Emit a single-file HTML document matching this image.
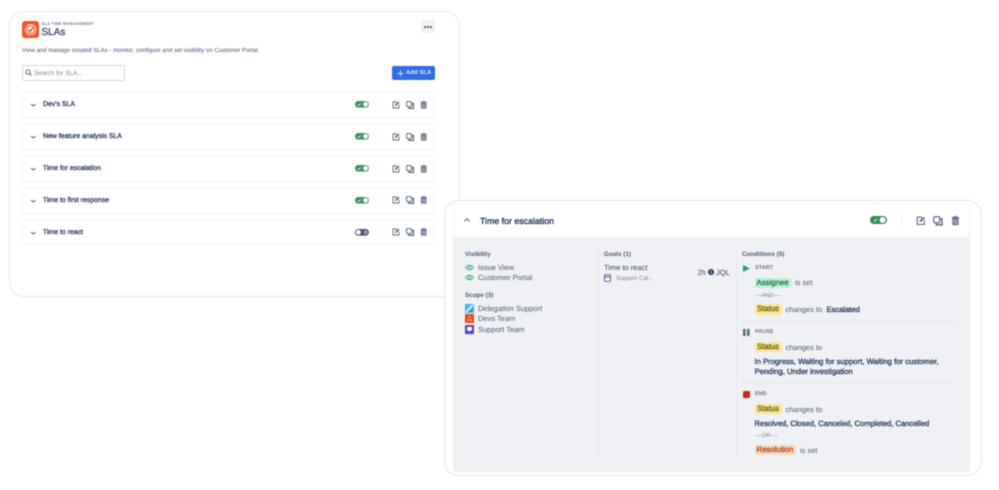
<!DOCTYPE html>
<html><head><meta charset="utf-8">
<style>
html,body{margin:0;padding:0;background:#fff}
body{width:999px;height:490px;position:relative;overflow:hidden;font-family:"Liberation Sans",sans-serif;color:#344563;text-rendering:geometricPrecision}
#w{position:absolute;left:0;top:0;width:999px;height:490px;filter:blur(.4px)}
.a{position:absolute;white-space:nowrap}
.card{position:absolute;box-sizing:border-box;background:#fff;border:1.5px solid #e6e3fd;border-radius:15px}
.row{position:absolute;left:22px;width:412px;height:26px;box-sizing:border-box;border:1px solid #f3f4f6;border-radius:3px;background:#fff}
.name{position:absolute;white-space:nowrap;left:43px;font-size:6.9px;color:#253858;-webkit-text-stroke:.3px #253858}
.lab{position:absolute;white-space:nowrap;font-size:6.3px;font-weight:bold;color:#4b5a78}
.t{position:absolute;white-space:nowrap;font-size:7.5px;color:#4a5a78}
.b{position:absolute;white-space:nowrap;font-size:7.6px;color:#253858;-webkit-text-stroke:.3px #253858}
.tag{position:absolute;white-space:nowrap;font-size:7.8px;border-radius:2px;height:10.5px;line-height:10.5px;text-align:center;-webkit-text-stroke:.3px currentColor}
.y{background:#f8e69a;color:#6b5a10}
.g{background:#bdf0d5;color:#1f7a50}
.o{background:#fbd9c0;color:#a5461d}
.hr{position:absolute;height:1px;background:#e6e8ec}
.state{position:absolute;white-space:nowrap;font-size:5.5px;font-weight:bold;color:#6b778c}
svg{position:absolute;overflow:visible}
</style></head>
<body>
<div id="w">

<!-- LEFT CARD -->
<div class="card" style="left:9px;top:11px;width:451px;height:286px"></div>

<svg style="left:22px;top:20.5px" width="17" height="17" viewBox="0 0 17 17">
<rect width="17" height="17" rx="3" fill="#f4552c"/>
<circle cx="8.5" cy="8.7" r="5.4" fill="#fff"/>
<circle cx="8.5" cy="8.7" r="4" fill="none" stroke="#e23f24" stroke-width="1"/>
<path d="M6.3 8.6L8 10.3L11.2 6.6" fill="none" stroke="#e23f24" stroke-width="1.4"/>
</svg>
<div class="a" style="left:41.5px;top:20.5px;font-size:4px;font-weight:bold;color:#6b778c;letter-spacing:.2px">SLA TIME MANAGEMENT</div>
<div class="a" style="left:41.5px;top:26.5px;font-size:10px;color:#253858;-webkit-text-stroke:.2px #253858">SLAs</div>

<div class="a" style="left:421px;top:20px;width:14px;height:13px;background:#f1f2f4;border-radius:2px"></div>
<div class="a" style="left:424px;top:26.2px;width:1.7px;height:1.7px;background:#344563;border-radius:50%;box-shadow:3px 0 0 #344563,6px 0 0 #344563"></div>

<div class="a" style="left:22px;top:47.8px;font-size:6px;color:#42526e">View and manage created SLAs - monitor, configure and set visibility on Customer Portal.</div>

<div class="a" style="left:21.5px;top:65px;width:103px;height:16px;box-sizing:border-box;border:1px solid #d5d8dd;border-radius:2px;background:#fff"></div>
<svg style="left:25px;top:69px" width="7" height="7" viewBox="0 0 7 7"><circle cx="3" cy="3" r="2.2" fill="none" stroke="#44546f" stroke-width=".9"/><path d="M4.7 4.7L6.6 6.6" stroke="#44546f" stroke-width=".9"/></svg>
<div class="a" style="left:34px;top:69.7px;font-size:6.4px;color:#7a869a">Search for SLA...</div>

<div class="a" style="left:392px;top:66px;width:42.5px;height:14px;background:#2f6ce5;border-radius:2px"></div>
<svg style="left:397px;top:69.5px" width="7" height="7" viewBox="0 0 7 7"><path d="M3.5 .5V6.5M.5 3.5H6.5" stroke="#dce8ff" stroke-width=".9"/></svg>
<div class="a" style="left:406px;top:70px;font-size:6px;font-weight:bold;color:#dce8ff">Add SLA</div>

<div class="row" style="top:92px"></div>
<div class="row" style="top:124px"></div>
<div class="row" style="top:156px"></div>
<div class="row" style="top:187.5px"></div>
<div class="row" style="top:219px"></div>

<div class="name" style="top:101.2px">Dev's SLA</div>
<div class="name" style="top:133.2px">New feature analysis SLA</div>
<div class="name" style="top:165.2px">Time for escalation</div>
<div class="name" style="top:196.7px">Time to first response</div>
<div class="name" style="top:228.7px">Time to react</div>

<svg width="0" height="0" style="left:0;top:0">
<defs>
<g id="chev"><path d="M0 0L2.2 2L4.4 0" fill="none" stroke="#44546f" stroke-width=".9"/></g>
<g id="edit" fill="none" stroke="#5b6980" stroke-width=".9"><path d="M5 1H1V7H7V3.5"/><path d="M3 5L3.3 3.4L6.3.6L7.5 1.8L4.5 4.7Z" fill="#5b6980" stroke="none"/></g>
<g id="copy" fill="none" stroke="#5b6980" stroke-width="1"><rect x=".6" y=".6" width="5" height="5" rx="1"/><path d="M6 2.5H7.5V7.4H2.8V6" stroke-width="1.2"/></g>
<g id="del"><path d="M1 1.6H6.4V7.6H1Z" fill="#6b778c"/><path d="M.4 1.3H7M2.6 1V.3H4.8V1" stroke="#5b6980" stroke-width=".7" fill="none"/><path d="M2.5 3V6.4M3.7 3V6.4M4.9 3V6.4" stroke="#dfe1e6" stroke-width=".45"/></g>
<g id="eye" fill="none" stroke="#57b48c" stroke-width=".9"><path d="M.4 3.5C2.5.4 6.5.4 8.6 3.5C6.5 6.6 2.5 6.6.4 3.5Z"/><circle cx="4.5" cy="3.5" r="1.5"/></g>
</defs>
</svg>

<!-- chevrons -->
<svg style="left:31px;top:104px" width="5" height="3"><use href="#chev"/></svg>
<svg style="left:31px;top:136px" width="5" height="3"><use href="#chev"/></svg>
<svg style="left:31px;top:168px" width="5" height="3"><use href="#chev"/></svg>
<svg style="left:31px;top:199.5px" width="5" height="3"><use href="#chev"/></svg>
<svg style="left:31px;top:231.5px" width="5" height="3"><use href="#chev"/></svg>

<!-- toggles -->
<svg style="left:355px;top:101.2px" width="14" height="7" viewBox="0 0 14 7"><rect width="14" height="6.6" rx="3.3" fill="#3f8f63"/><circle cx="10.6" cy="3.3" r="2.4" fill="#fff"/><path d="M2.8 3.4L4 4.5L5.7 2.3" fill="none" stroke="#fff" stroke-width=".7"/></svg>
<svg style="left:355px;top:133.2px" width="14" height="7" viewBox="0 0 14 7"><rect width="14" height="6.6" rx="3.3" fill="#3f8f63"/><circle cx="10.6" cy="3.3" r="2.4" fill="#fff"/><path d="M2.8 3.4L4 4.5L5.7 2.3" fill="none" stroke="#fff" stroke-width=".7"/></svg>
<svg style="left:355px;top:165.2px" width="14" height="7" viewBox="0 0 14 7"><rect width="14" height="6.6" rx="3.3" fill="#3f8f63"/><circle cx="10.6" cy="3.3" r="2.4" fill="#fff"/><path d="M2.8 3.4L4 4.5L5.7 2.3" fill="none" stroke="#fff" stroke-width=".7"/></svg>
<svg style="left:355px;top:196.7px" width="14" height="7" viewBox="0 0 14 7"><rect width="14" height="6.6" rx="3.3" fill="#3f8f63"/><circle cx="10.6" cy="3.3" r="2.4" fill="#fff"/><path d="M2.8 3.4L4 4.5L5.7 2.3" fill="none" stroke="#fff" stroke-width=".7"/></svg>
<svg style="left:355px;top:228.7px" width="14" height="7" viewBox="0 0 14 7"><rect width="14" height="6.6" rx="3.3" fill="#46516e"/><circle cx="3.4" cy="3.3" r="2.4" fill="#fff"/><circle cx="10.7" cy="3.3" r="1.4" fill="none" stroke="#fff" stroke-width=".6"/></svg>

<!-- dividers -->
<div class="a" style="left:381px;top:99px;width:1px;height:11px;background:#f0f1f3"></div>
<div class="a" style="left:381px;top:131px;width:1px;height:11px;background:#f0f1f3"></div>
<div class="a" style="left:381px;top:163px;width:1px;height:11px;background:#f0f1f3"></div>
<div class="a" style="left:381px;top:194.5px;width:1px;height:11px;background:#f0f1f3"></div>
<div class="a" style="left:381px;top:226.5px;width:1px;height:11px;background:#f0f1f3"></div>

<!-- action icons -->
<svg style="left:392px;top:100.5px" width="8" height="8"><use href="#edit"/></svg><svg style="left:406px;top:100.5px" width="8" height="8"><use href="#copy"/></svg><svg style="left:420px;top:100.5px" width="8" height="8"><use href="#del"/></svg>
<svg style="left:392px;top:132.5px" width="8" height="8"><use href="#edit"/></svg><svg style="left:406px;top:132.5px" width="8" height="8"><use href="#copy"/></svg><svg style="left:420px;top:132.5px" width="8" height="8"><use href="#del"/></svg>
<svg style="left:392px;top:164.5px" width="8" height="8"><use href="#edit"/></svg><svg style="left:406px;top:164.5px" width="8" height="8"><use href="#copy"/></svg><svg style="left:420px;top:164.5px" width="8" height="8"><use href="#del"/></svg>
<svg style="left:392px;top:196px" width="8" height="8"><use href="#edit"/></svg><svg style="left:406px;top:196px" width="8" height="8"><use href="#copy"/></svg><svg style="left:420px;top:196px" width="8" height="8"><use href="#del"/></svg>
<svg style="left:392px;top:228px" width="8" height="8"><use href="#edit"/></svg><svg style="left:406px;top:228px" width="8" height="8"><use href="#copy"/></svg><svg style="left:420px;top:228px" width="8" height="8"><use href="#del"/></svg>

<!-- RIGHT CARD -->
<div class="card" style="left:444px;top:200px;width:538px;height:276px"></div>
<div class="a" style="left:452.5px;top:203px;width:517px;height:34px;box-sizing:border-box;border:1px solid #f3f4f6;border-bottom:0;background:#fff"></div>
<div class="a" style="left:452.5px;top:237px;width:517px;height:234.5px;background:#f0f1f4;border-radius:0 0 2px 2px"></div>

<svg style="left:464px;top:218px" width="6" height="4"><path d="M.4 3.4L3 .8L5.6 3.4" fill="none" stroke="#44546f" stroke-width="1"/></svg>
<div class="a" style="left:480px;top:215.6px;font-size:8.8px;color:#253858;-webkit-text-stroke:.35px #253858">Time for escalation</div>

<svg style="left:869.5px;top:216px" width="17" height="8" viewBox="0 0 17 8"><rect width="17" height="8" rx="4" fill="#2f8a58"/><circle cx="12.6" cy="4" r="3" fill="#fff"/><path d="M3.6 4.1L5 5.4L7 2.8" fill="none" stroke="#fff" stroke-width=".8"/></svg>
<div class="a" style="left:901px;top:212px;width:1px;height:16px;background:#f0f1f3"></div>
<svg style="left:915.5px;top:215.5px;transform:scale(1.2);transform-origin:0 0" width="8" height="8"><use href="#edit"/></svg>
<svg style="left:933px;top:215.5px;transform:scale(1.2);transform-origin:0 0" width="8" height="8"><use href="#copy"/></svg>
<svg style="left:950.5px;top:215.5px;transform:scale(1.2);transform-origin:0 0" width="8" height="8"><use href="#del"/></svg>

<!-- column separators -->
<div class="a" style="left:597.5px;top:249px;width:1px;height:208px;background:#e6e8ec"></div>
<div class="a" style="left:735.5px;top:249px;width:1px;height:208px;background:#e6e8ec"></div>

<!-- Visibility -->
<div class="lab" style="left:465px;top:250.5px">Visibility</div>
<svg style="left:465px;top:263.5px" width="9" height="7"><use href="#eye"/></svg>
<div class="t" style="left:478px;top:263px">Issue View</div>
<svg style="left:465px;top:274px" width="9" height="7"><use href="#eye"/></svg>
<div class="t" style="left:478px;top:273px">Customer Portal</div>

<div class="lab" style="left:465px;top:292px">Scope (3)</div>
<svg style="left:465px;top:304px" width="9" height="9" viewBox="0 0 9 9"><rect width="9" height="9" fill="#4fb3e8"/><path d="M1 8L8 1" stroke="#fff" stroke-width="1.4"/><path d="M5 8L8 5" stroke="#1c6fb5" stroke-width="1.2"/></svg>
<div class="t" style="left:478px;top:304px">Delegation Support</div>
<svg style="left:465px;top:314px" width="9" height="9" viewBox="0 0 9 9"><rect width="9" height="9" fill="#e8491f"/><circle cx="3" cy="5.8" r=".9" fill="#fbd0c0"/><circle cx="6" cy="5.8" r=".9" fill="#fbd0c0"/><circle cx="4.5" cy="3" r=".9" fill="#fbd0c0"/></svg>
<div class="t" style="left:478px;top:314px">Devs Team</div>
<svg style="left:465px;top:324.5px" width="9" height="9" viewBox="0 0 9 9"><rect width="9" height="9" fill="#5243c8"/><rect x="2" y="2" width="5" height="3.6" rx=".8" fill="#fff"/><path d="M3.5 5.5L4.5 7L5.5 5.5Z" fill="#fff"/></svg>
<div class="t" style="left:478px;top:324.5px">Support Team</div>

<!-- Goals -->
<div class="lab" style="left:604px;top:250.5px">Goals (1)</div>
<div class="t" style="left:604px;top:263px;color:#344563">Time to react</div>
<svg style="left:604px;top:273.5px" width="7" height="8" viewBox="0 0 7 8"><rect x=".4" y="1" width="6.2" height="6.4" rx=".8" fill="none" stroke="#344563" stroke-width=".8"/><path d="M.4 3H6.6M2 .2V1.6M5 .2V1.6" stroke="#344563" stroke-width=".8"/></svg>
<div class="a" style="left:616px;top:274.5px;font-size:6.1px;color:#7a869a">Support Cal...</div>
<div class="t" style="left:697.5px;top:267.5px;color:#344563">2h</div>
<svg style="left:707.5px;top:269px" width="6" height="6" viewBox="0 0 6 6"><circle cx="3" cy="3" r="3" fill="#253858"/><path d="M3 2.4V4.6" stroke="#fff" stroke-width=".8"/><circle cx="3" cy="1.5" r=".45" fill="#fff"/></svg>
<div class="t" style="left:716px;top:267.5px;color:#344563">JQL</div>

<!-- Conditions -->
<div class="lab" style="left:742px;top:250.5px">Conditions (5)</div>

<svg style="left:743px;top:264.5px" width="7" height="7" viewBox="0 0 7 7"><path d="M0 0L7 3.5L0 7Z" fill="#2f9e66"/></svg>
<div class="state" style="left:755px;top:265px">START</div>
<div class="tag g" style="left:754.5px;top:277.5px;width:36px">Assignee</div>
<div class="t" style="left:795px;top:278.2px">is set</div>
<div class="a" style="left:755px;top:292.5px;font-size:5.4px;color:#6b778c">----AND----</div>
<div class="tag y" style="left:754.5px;top:304px;width:27px">Status</div>
<div class="t" style="left:785.5px;top:304.5px">changes to</div>
<div class="b" style="left:826.5px;top:304.5px">Escalated</div>
<div class="hr" style="left:742px;top:321px;width:214px"></div>

<svg style="left:743px;top:328.5px" width="7" height="7" viewBox="0 0 7 7"><rect x="0" y="0" width="2.6" height="7" fill="#5b6980"/><rect x="4" y="0" width="2.6" height="7" fill="#5b6980"/></svg>
<div class="state" style="left:755px;top:329px">PAUSE</div>
<div class="tag y" style="left:754.5px;top:341.5px;width:27px">Status</div>
<div class="t" style="left:785.5px;top:342.5px">changes to</div>
<div class="b" style="left:754.5px;top:356.5px;font-size:7.7px">In Progress, Waiting for support, Waiting for customer,</div>
<div class="b" style="left:754.5px;top:366.5px;font-size:7.7px">Pending, Under investigation</div>
<div class="hr" style="left:742px;top:383px;width:214px"></div>

<div class="a" style="left:743px;top:390.5px;width:7px;height:7px;background:#c9281c;border-radius:1px"></div>
<div class="state" style="left:755px;top:391px">END</div>
<div class="tag y" style="left:754.5px;top:403.5px;width:27px">Status</div>
<div class="t" style="left:785.5px;top:404.5px">changes to</div>
<div class="b" style="left:754.5px;top:419px">Resolved, Closed, Canceled, Completed, Cancelled</div>
<div class="a" style="left:755px;top:433px;font-size:5.4px;color:#6b778c">----OR----</div>
<div class="tag o" style="left:754.5px;top:444.7px;width:41px">Resolution</div>
<div class="t" style="left:800px;top:445.5px">is set</div>

</div>
</body></html>
